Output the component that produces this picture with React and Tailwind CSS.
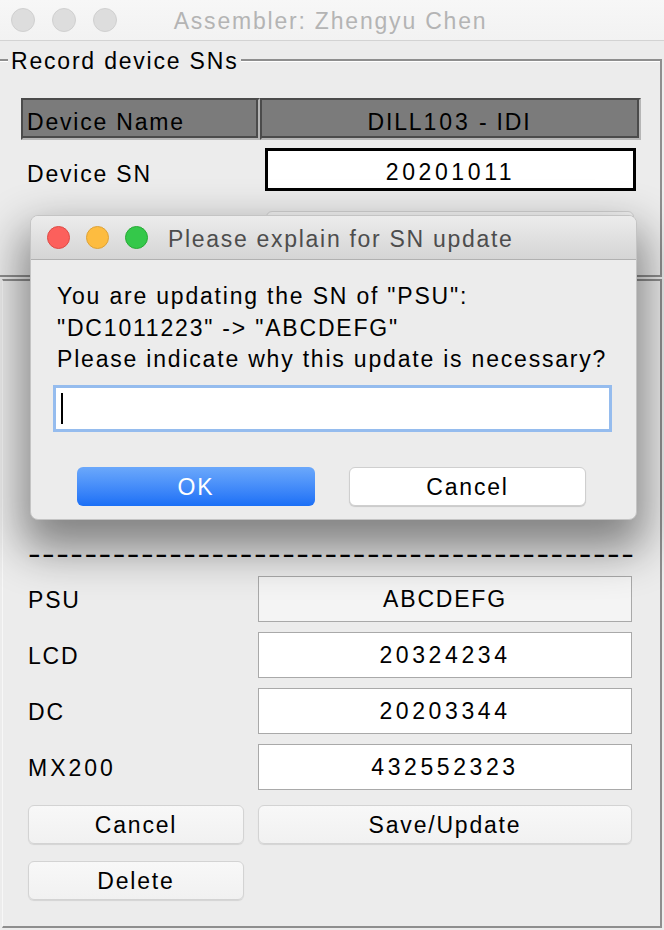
import React from "react";

const FONT = "font-['Liberation_Sans',Arial,sans-serif]";

function Light({ color }) {
  return <div className={`w-[23px] h-[23px] rounded-full border ${color}`} />;
}

function HeaderCell({ children, className }) {
  return (
    <div className={`h-full border-t-2 border-l-2 border-r-2 border-b-2 border-t-[#4b4b4b] border-l-[#4b4b4b] border-r-[#b6b6b6] border-b-[#b6b6b6] ${className}`}>
      <div className="h-full bg-[#7b7b7b] border-r-2 border-b-2 border-[#4b4b4b] flex items-center pt-[9px]">
        {children}
      </div>
    </div>
  );
}

function Field({ value, muted, digits }) {
  return (
    <div className={`h-[46px] border border-[#a9a9a9] flex items-center justify-center ${digits ? "tracking-[3.6px]" : ""} ${muted ? "bg-[#f4f4f4]" : "bg-white"}`}>
      {value}
    </div>
  );
}

function MacButton({ children, className }) {
  return (
    <div className={`h-[39px] rounded-[6px] border border-[#d3d3d3] bg-gradient-to-b from-[#f8f8f8] to-[#f1f1f1] shadow-[0_1px_1px_rgba(0,0,0,0.1)] flex items-center justify-center pt-[2px] ${className}`}>
      {children}
    </div>
  );
}

export default function App() {
  const rows = [
    { label: "PSU", value: "ABCDEFG", muted: true },
    { label: "LCD", value: "20324234", digits: true },
    { label: "DC", value: "20203344", digits: true },
    { label: "MX200", value: "432552323", digits: true },
  ];

  return (
    <div className={`w-[664px] h-[930px] bg-[#ececec] relative overflow-hidden flex flex-col text-[23px] tracking-[1.8px] text-black ${FONT}`}>
      {/* window title bar (inactive) */}
      <div className="h-[41px] shrink-0 bg-gradient-to-b from-[#f7f7f7] to-[#f2f2f2] border-b border-[#d3d3d3] flex items-center">
        <div className="flex items-center gap-[17px] pl-[11px]">
          <div className="w-[24px] h-[24px] rounded-full bg-[#dddddd] border border-[#d0d0d0]" />
          <div className="w-[24px] h-[24px] rounded-full bg-[#dddddd] border border-[#d0d0d0]" />
          <div className="w-[24px] h-[24px] rounded-full bg-[#dddddd] border border-[#d0d0d0]" />
        </div>
        <div className="flex-1 text-center pr-[120px] pt-[2px] text-[#b4b4b4]">Assembler: Zhengyu Chen</div>
      </div>

      {/* Record device SNs group */}
      <div className="relative mt-[18px] mr-[2px] h-[218px] shrink-0 border-t-2 border-r-2 border-b-2 border-[#8e8e8e] shadow-[inset_0_1px_0_#ffffff]">
        <div className="absolute -top-[14px] left-[8px] px-[3px] bg-[#ececec] leading-[28px]">Record device SNs</div>

        <div className="pt-[37px] pl-[21px]">
          <div className="flex h-[42px] w-[620px]">
            <HeaderCell className="w-[239px]">
              <span className="pl-[4px]">Device Name</span>
            </HeaderCell>
            <HeaderCell className="w-[381px]">
              <span className="w-full text-center">DILL<span className="tracking-[3px]">103</span> - IDI</span>
            </HeaderCell>
          </div>

          <div className="flex items-center mt-[7px]">
            <div className="w-[244px] pl-[6px] pt-[10px]">Device SN</div>
            <div className="w-[371px] h-[43px] border-[3px] border-black bg-white flex items-center justify-center pt-[6px] tracking-[3.6px]">
              20201011
            </div>
          </div>

          <div className="mt-[19px] ml-[245px] w-[368px] h-[36px] rounded-[6px] border border-[#d3d3d3] bg-[#f5f5f5]" />
        </div>
      </div>

      {/* components panel */}
      <div className="mt-[2px] ml-[2px] mr-[2px] mb-[2px] flex-1 border-t-2 border-r-2 border-b-2 border-l border-t-[#8e8e8e] border-r-[#8e8e8e] border-b-[#8e8e8e] border-l-[#f7f7f7] pl-[25px] pt-[258px]">
        <div className="h-[28px] leading-[28px] w-[400px] origin-left scale-x-[1.65] scale-y-[1.2] tracking-[0.9px] whitespace-nowrap">
          -------------------------------------------
        </div>

        <div className="mt-[9px] grid grid-cols-[216px_374px] gap-x-[14px] gap-y-[10px]">
          {rows.map((r) => (
            <React.Fragment key={r.label}>
              <div className={`h-[46px] flex items-center pt-[2px] ${r.label === "MX200" ? "tracking-[3px]" : ""}`}>{r.label}</div>
              <Field value={r.value} muted={r.muted} digits={r.digits} />
            </React.Fragment>
          ))}
        </div>

        <div className="mt-[15px] grid grid-cols-[216px_374px] gap-x-[14px] gap-y-[17px]">
          <MacButton>Cancel</MacButton>
          <MacButton>Save/Update</MacButton>
          <MacButton>Delete</MacButton>
        </div>
      </div>

      {/* modal dialog */}
      <div className="absolute left-[30px] top-[215px] w-[607px] h-[305px] rounded-[8px] bg-[#ececec] border border-[#c4c4c4] shadow-[0_22px_45px_8px_rgba(0,0,0,0.45)] flex flex-col overflow-hidden">
        <div className="h-[44px] shrink-0 bg-gradient-to-b from-[#ececec] to-[#d5d5d5] border-b border-[#b1b1b1] flex items-center pl-[16px]">
          <div className="flex items-center gap-[16px]">
            <Light color="bg-[#fc605c] border-[#de4a45]" />
            <Light color="bg-[#fdbc40] border-[#dea236]" />
            <Light color="bg-[#34c84a] border-[#27aa35]" />
          </div>
          <div className="ml-[20px] pt-[4px] text-[#4d4d4d] tracking-[1.7px]">Please explain for SN update</div>
        </div>

        <div className="pl-[26px] pt-[21px] leading-[31.5px]">
          <div>You are updating the SN of "PSU":</div>
          <div>"DC1011223" -&gt; "ABCDEFG"</div>
          <div>Please indicate why this update is necessary?</div>
        </div>

        <div className="mt-[9px] ml-[22px] w-[559px] h-[47px] border-[3px] border-[#95bcee] bg-white flex items-center pl-[5px]">
          <span className="w-[2px] h-[31px] bg-black" />
        </div>

        <div className="mt-[35px] ml-[46px] flex gap-[34px]">
          <div className="w-[238px] h-[39px] rounded-[6px] bg-gradient-to-b from-[#6ba8fb] to-[#1a6ff6] text-white flex items-center justify-center pt-[2px]">
            OK
          </div>
          <div className="w-[237px] h-[39px] rounded-[6px] bg-white border border-[#cfcfcf] shadow-[0_1px_1px_rgba(0,0,0,0.15)] flex items-center justify-center pt-[2px]">
            Cancel
          </div>
        </div>
      </div>
    </div>
  );
}
